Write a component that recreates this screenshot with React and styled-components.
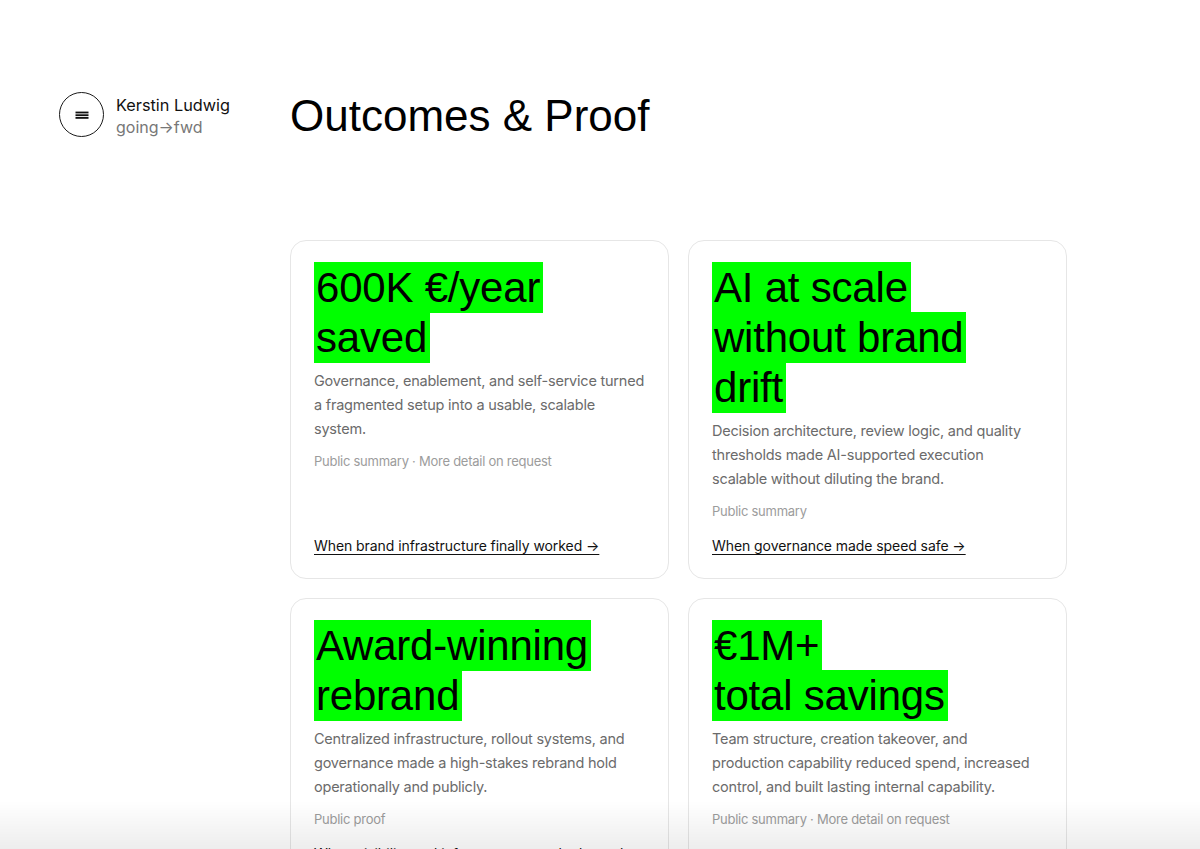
import React from "react";
import styled, { createGlobalStyle } from "styled-components";

const Global = createGlobalStyle`
  html, body { margin: 0; padding: 0; background: #fff; }
  body { font-family: Inter, "Noto Sans", sans-serif; color: #111; -webkit-font-smoothing: antialiased; }
  * { box-sizing: border-box; }
`;

const Page = styled.div`
  display: grid;
  grid-template-columns: 231px 777px;
  padding: 92px 0 0 59px;
  min-height: 849px;
`;

const Sidebar = styled.aside`
  display: flex;
  align-items: flex-start;
  gap: 12px;
`;

const MenuButton = styled.button`
  width: 45px;
  height: 45px;
  border-radius: 50%;
  border: 1.5px solid #1a1a1a;
  background: #fff;
  display: flex;
  align-items: center;
  justify-content: center;
  padding: 0;
  flex-shrink: 0;
`;

const Brand = styled.div`
  display: flex;
  flex-direction: column;
  padding-top: 2px;
`;

const Name = styled.span`
  font-size: 16.3px;
  line-height: 22px;
  color: #111;
`;

const Tag = styled.span`
  font-size: 16px;
  line-height: 22px;
  color: #777;
`;

const Main = styled.main`
  display: flex;
  flex-direction: column;
`;

const Title = styled.h1`
  margin: 0;
  font-family: "Liberation Sans", Arial, sans-serif;
  font-weight: 400;
  font-size: 44px;
  line-height: 48px;
  color: #000;
`;

const Grid = styled.div`
  display: grid;
  grid-template-columns: 1fr 1fr;
  gap: 19px;
  margin-top: 100px;
`;

const Card = styled.article`
  border: 1px solid #e6e6e6;
  border-radius: 16px;
  padding: 22px 23px 22px;
  display: flex;
  flex-direction: column;
  background: #fff;
`;

const Headline = styled.h2`
  margin: 0;
  font-family: "Liberation Sans", Arial, sans-serif;
  font-weight: 400;
  font-size: 42px;
  line-height: 50px;
  letter-spacing: -0.005em;
  color: #000;
`;

const Mark = styled.span`
  background: #00ff00;
  padding: 2px 3px 2px 2px;
  box-decoration-break: clone;
  -webkit-box-decoration-break: clone;
`;

const Desc = styled.p`
  margin: 6px 0 0;
  font-size: 14.5px;
  line-height: 24px;
  letter-spacing: -0.015em;
  color: #6b6b6b;
  white-space: pre-line;
`;

const Meta = styled.p`
  margin: 12px 0 0;
  font-size: 13px;
  line-height: 16px;
  letter-spacing: -0.02em;
  color: #9c9c9c;
`;

const CardLink = styled.a`
  margin-top: auto;
  padding-top: 17px;
  font-size: 14px;
  line-height: 20px;
  letter-spacing: -0.005em;
  color: #111;
  text-decoration: underline;
  text-underline-offset: 3px;
  text-decoration-thickness: 1px;
`;

const Fade = styled.div`
  position: fixed;
  left: 0;
  right: 0;
  bottom: 0;
  height: 48px;
  pointer-events: none;
  background: linear-gradient(to bottom, rgba(0,0,0,0), rgba(0,0,0,0.07));
`;

const Hamburger = () => (
  <svg width="16" height="12" viewBox="0 0 16 12" aria-hidden="true">
    <rect x="1.5" y="2.6" width="13" height="1.8" fill="#111" />
    <rect x="1.5" y="5.3" width="13" height="1.8" fill="#111" />
    <rect x="1.5" y="8" width="13" height="1.8" fill="#111" />
  </svg>
);

const cards = [
  {
    title: ["600K €/year", "saved"],
    desc: "Governance, enablement, and self-service turned a fragmented setup into a usable, scalable system.",
    meta: "Public summary · More detail on request",
    link: "When brand infrastructure finally worked →",
  },
  {
    title: ["AI at scale without brand drift"],
    desc: "Decision architecture, review logic, and quality thresholds made AI-supported execution\nscalable without diluting the brand.",
    meta: "Public summary",
    link: "When governance made speed safe →",
  },
  {
    title: ["Award-winning", "rebrand"],
    desc: "Centralized infrastructure, rollout systems, and governance made a high-stakes rebrand hold operationally and publicly.",
    meta: "Public proof",
    link: "When visibility and infrastructure worked together →",
  },
  {
    title: ["€1M+", "total savings"],
    desc: "Team structure, creation takeover, and production capability reduced spend, increased control, and built lasting internal capability.",
    meta: "Public summary · More detail on request",
    link: "When in-house capability paid off →",
  },
];

export default function App() {
  return (
    <>
      <Global />
      <Page>
        <Sidebar>
          <MenuButton aria-label="Menu"><Hamburger /></MenuButton>
          <Brand>
            <Name>Kerstin Ludwig</Name>
            <Tag>going→fwd</Tag>
          </Brand>
        </Sidebar>
        <Main>
          <Title>Outcomes &amp; Proof</Title>
          <Grid>
            {cards.map((c, i) => (
              <Card key={i}>
                <Headline>
                  <Mark>
                    {c.title.map((t, j) => (
                      <React.Fragment key={j}>
                        {j > 0 && <br />}
                        {t}
                      </React.Fragment>
                    ))}
                  </Mark>
                </Headline>
                <Desc>{c.desc}</Desc>
                <Meta>{c.meta}</Meta>
                <CardLink href="#">{c.link}</CardLink>
              </Card>
            ))}
          </Grid>
        </Main>
      </Page>
      <Fade />
    </>
  );
}
